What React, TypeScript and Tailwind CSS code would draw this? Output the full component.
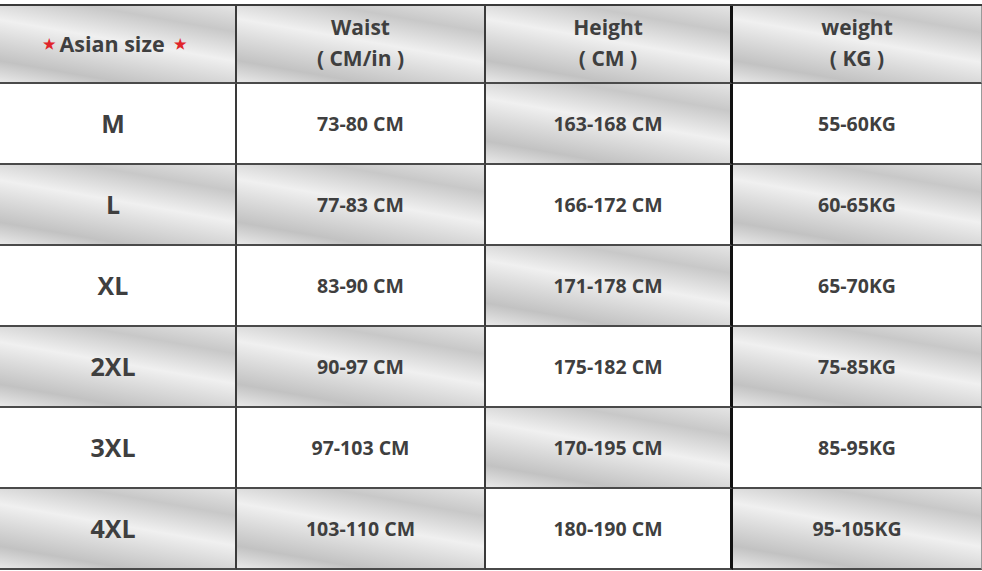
import React from "react";

const rows: [string, string, string, string][] = [
  ["M", "73-80 CM", "163-168 CM", "55-60KG"],
  ["L", "77-83 CM", "166-172 CM", "60-65KG"],
  ["XL", "83-90 CM", "171-178 CM", "65-70KG"],
  ["2XL", "90-97 CM", "175-182 CM", "75-85KG"],
  ["3XL", "97-103 CM", "170-195 CM", "85-95KG"],
  ["4XL", "103-110 CM", "180-190 CM", "95-105KG"],
];

const silver =
  "bg-[linear-gradient(190deg,#e4e4e4_0%,#c8c8c8_22%,#f0f0f0_47%,#dcdcdc_62%,#c2c2c2_82%,#e8e8e8_100%)]";

const colBorder = [
  "border-r-2 border-r-[#3a3a3a] pr-[9px]",
  "border-r-2 border-r-[#3a3a3a]",
  "border-r-[3px] border-r-[#111]",
  "border-r border-r-[#9a9a9a]",
];

function Cell({
  children,
  col,
  grey,
}: {
  children: React.ReactNode;
  col: number;
  grey: boolean;
}) {
  return (
    <div
      className={`flex flex-col items-center justify-center border-b-2 border-b-[#4a4a4a] ${colBorder[col]} ${
        grey ? silver : "bg-white"
      }`}
    >
      {children}
    </div>
  );
}

export default function App() {
  return (
    <div
      className="w-[982px] h-[571px] bg-white pt-[4px] overflow-hidden text-[#3f3f3f] font-bold"
      style={{ fontFamily: '"Open Sans", "Liberation Sans", sans-serif' }}
    >
      <div className="grid grid-cols-[237px_249px_247px_249px] grid-rows-[78px_repeat(6,81px)] border-t-2 border-t-[#3a3a3a]">
        <Cell col={0} grey>
          <div className="flex items-center text-[21.5px] leading-none pl-[4px]">
            <span className="text-[#e0242a] text-[14px] mr-[3px]">★</span>
            <span>Asian size</span>
            <span className="text-[#e0242a] text-[14px] ml-[9px]">★</span>
          </div>
        </Cell>
        <Cell col={1} grey>
          <div className="text-[21px] leading-[31px] text-center -mt-[2px]">
            <div>Waist</div>
            <div>( CM/in )</div>
          </div>
        </Cell>
        <Cell col={2} grey>
          <div className="text-[21px] leading-[31px] text-center -mt-[2px]">
            <div>Height</div>
            <div>( CM )</div>
          </div>
        </Cell>
        <Cell col={3} grey>
          <div className="text-[21px] leading-[31px] text-center -mt-[2px]">
            <div>weight</div>
            <div>( KG )</div>
          </div>
        </Cell>
        {rows.map((r, i) => {
          const odd = i % 2 === 1;
          const greys = odd ? [true, true, false, true] : [false, false, true, false];
          return r.map((v, c) => (
            <Cell key={`${i}-${c}`} col={c} grey={greys[c]}>
              <span className={c === 0 ? "text-[25px] leading-none" : "text-[19.5px] leading-none"}>
                {v}
              </span>
            </Cell>
          ));
        })}
      </div>
    </div>
  );
}
